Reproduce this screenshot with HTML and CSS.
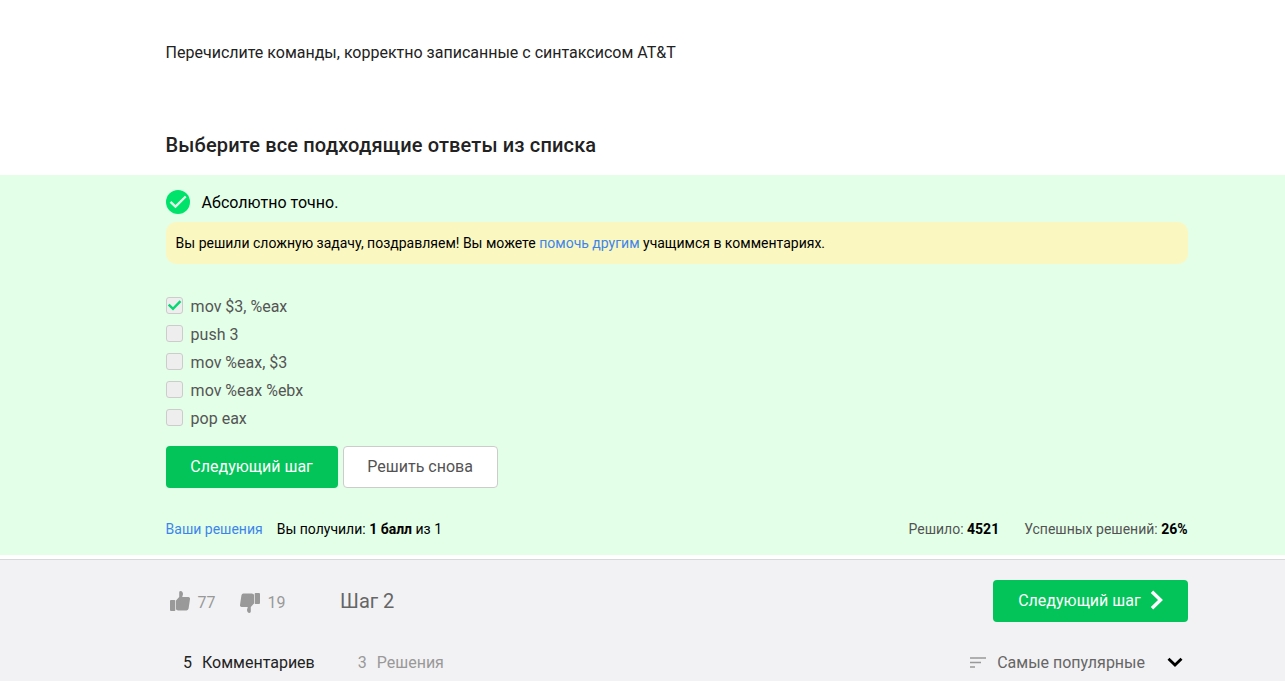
FILE: index.html
```html
<!DOCTYPE html>
<html lang="ru">
<head>
<meta charset="utf-8">
<title>Шаг 2</title>
<link rel="stylesheet" href="styles.css">
</head>
<body>
<main>
  <section class="task wrap">
    <p class="question">Перечислите команды, корректно записанные с синтаксисом AT&amp;T</p>
    <h2 class="heading">Выберите все подходящие ответы из списка</h2>
  </section>
  <section class="attempt">
    <div class="wrap">
      <div class="verdict">
        <svg width="24" height="24" viewBox="0 0 24 24"><circle cx="12" cy="12" r="12" fill="#00e36b"/><path d="M4.500 11.800l5 4.800L19.700 6.500" fill="none" stroke="#e3ffe8" stroke-width="2.300"/></svg>
        <span>Абсолютно точно.</span>
      </div>
      <p class="hint">Вы решили сложную задачу, поздравляем! Вы можете <a href="#">помочь другим</a> учащимся в комментариях.</p>
      <ul class="options">
        <li><span class="box"><svg width="15" height="15" viewBox="0 0 15 15"><path d="M1.700 6.700l4.300 4.100 7.500-7.700" fill="none" stroke="#08d874" stroke-width="2.500"/></svg></span>mov $3, %eax</li>
        <li><span class="box"></span>push 3</li>
        <li><span class="box"></span>mov %eax, $3</li>
        <li><span class="box"></span>mov %eax %ebx</li>
        <li><span class="box"></span>pop eax</li>
      </ul>
      <div class="actions">
        <button class="btn btn-primary">Следующий шаг</button>
        <button class="btn btn-outline">Решить снова</button>
      </div>
      <div class="stats">
        <a href="#">Ваши решения</a>
        <span class="score">Вы получили: <b>1 балл</b> из 1</span>
        <span class="stat solved">Решило: <b>4521</b></span>
        <span class="stat">Успешных решений: <b>26%</b></span>
      </div>
    </div>
  </section>
</main>
<footer class="footer">
  <div class="wrap">
    <div class="toolbar">
      <span class="vote up"><svg width="20" height="20" viewBox="0 0 20 20"><path d="M1 9h3.500q.8 0 .8.800V19q0 1-.8 1H1q-1 0-1-1v-9q0-1 1-1zM6 9.500L9.200 6V1.400Q9.300 0 10.500 0 13 .2 13 3.300L12.200 6H18.500q1.700.2 1.500 1.900l-1.400 9.700q-.3 1.700-2 1.900H8.200q-2.200-.2-2.200-1.500z"/></svg>77</span>
      <span class="vote down"><svg width="20" height="20" viewBox="0 0 20 20"><path transform="rotate(180 10 10)" d="M1 9h3.500q.8 0 .8.800V19q0 1-.8 1H1q-1 0-1-1v-9q0-1 1-1zM6 9.500L9.200 6V1.400Q9.300 0 10.500 0 13 .2 13 3.300L12.200 6H18.500q1.700.2 1.500 1.900l-1.400 9.700q-.3 1.700-2 1.900H8.200q-2.200-.2-2.200-1.500z"/></svg>19</span>
      <span class="step">Шаг 2</span>
      <button class="btn btn-primary btn-next">Следующий шаг<svg width="14" height="20" viewBox="0 0 14 20"><path d="M2 1.700L10.500 10 2 18.300" fill="none" stroke="#fff" stroke-width="3.400"/></svg></button>
    </div>
    <div class="tabs">
      <span class="tab active"><span>5</span>Комментариев</span>
      <span class="tab"><span>3</span>Решения</span>
      <span class="sort"><svg width="16" height="11" viewBox="0 0 16 11"><path d="M0 1h16M0 5.500h11M0 10h5" stroke="#999" stroke-width="1.700"/></svg>Самые популярные<svg class="caret" width="16" height="11" viewBox="0 0 16 11"><path d="M1.500 1.700L8 8l6.500-6.300" fill="none" stroke="#000" stroke-width="2.800"/></svg></span>
    </div>
  </div>
</footer>
</body>
</html>
```
FILE: styles.css
```css
* { box-sizing: border-box; }
body {
  margin: 0;
  height: 681px;
  overflow: hidden;
  background: #fff;
  color: #222;
  font: 16px/24px Roboto, "Liberation Sans", sans-serif;
}
p, h2, ul { margin: 0; padding: 0; }
a { color: #3d85eb; text-decoration: none; }
.wrap { width: 1022px; margin-left: 165.6px; }
.task { height: 175px; padding-top: 41px; }
.heading {
  margin-top: 66px;
  font-size: 20px;
  line-height: 28px;
  font-weight: 500;
  letter-spacing: 0.15px;
}
.attempt { height: 380px; padding-top: 15px; background: #e3ffe8; color: #000; }
.verdict { display: flex; gap: 12px; height: 24px; line-height: 26px; }
.hint {
  height: 42px;
  margin-top: 8px;
  padding: 0 10px;
  border-radius: 10px;
  background: #fbf7c0;
  font-size: 14px;
  line-height: 42px;
}
.options { margin-top: 28px; list-style: none; color: #555; }
.options li { display: flex; gap: 8px; height: 28px; line-height: 30px; }
.box {
  width: 17px;
  height: 17px;
  margin-top: 5px;
  border: 1px solid #ccc;
  border-radius: 3px;
  background: #eee;
}
.box svg { display: block; }
.actions { display: flex; gap: 5px; margin-top: 14px; }
.btn {
  height: 42px;
  padding: 0;
  border: 0;
  border-radius: 4px;
  font: inherit;
}
.btn-primary { width: 172px; background: #02c459; color: #fff; }
.btn-outline { width: 155px; border: 1px solid #ccc; background: #fff; color: #535353; }
.stats { display: flex; margin-top: 29px; font-size: 14px; }
.score { margin-left: 14px; }
.stat { color: #535353; }
.stat b { color: #000; }
.solved { margin: 0 25px 0 auto; }
.footer {
  height: 122px;
  margin-top: 4px;
  padding-top: 20px;
  border-top: 1px solid #d8d8dc;
  background: #f2f2f4;
}
.toolbar { display: flex; height: 42px; }
.vote { display: flex; gap: 8px; margin-top: 11px; color: #999; }
.vote svg { fill: #999; }
.up { margin-left: 4px; }
.down { margin-left: 24px; }
.down svg { margin-top: 2px; }
.step { margin: 9px 0 0 54.5px; font-size: 20px; color: #666; }
.btn-next {
  display: flex;
  align-items: center;
  gap: 9px;
  width: 195px;
  margin-left: auto;
  padding-left: 25.6px;
}
.btn-next svg { margin-top: -3px; }
.tabs { display: flex; margin-top: 29px; padding: 0 4.6px 0 17.4px; }
.tab { display: flex; gap: 10px; margin-right: 43px; color: #999; }
.active { color: #222; }
.sort { display: flex; align-items: center; gap: 11.5px; margin-left: auto; color: #666; }
.sort svg { margin-top: -2px; }
.sort .caret { margin-left: 10.500px; }
```
